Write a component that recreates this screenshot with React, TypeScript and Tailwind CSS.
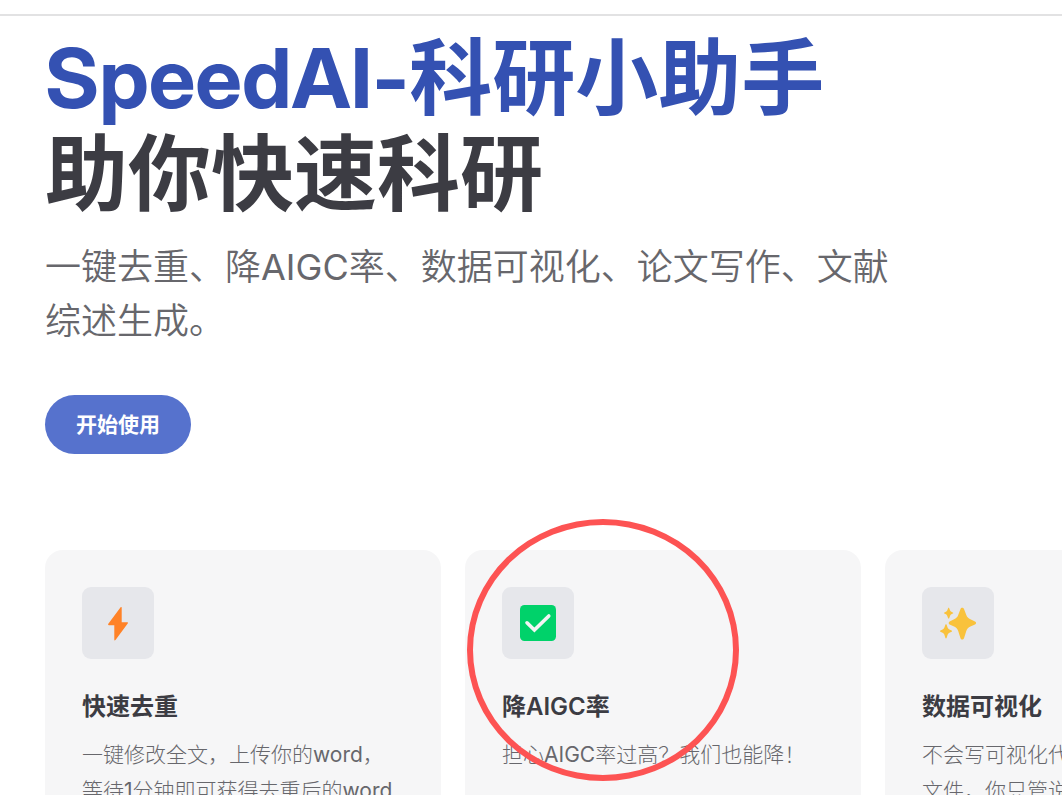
import { Fragment, type ReactNode } from 'react'

interface Feature {
  icon: ReactNode
  title: string
  details: string
  highlighted?: boolean
}

const BoltIcon = () => (
  <svg viewBox="0 0 36 36" className="size-9" aria-hidden="true">
    <path
      d="M20.8 2 Q21.7 1.6 21.7 2.6 V17.2 H27.2 Q28.6 17.3 27.7 18.5 L15.7 34.8 Q14.3 36.4 14.3 34.6 V20.3 H9 Q7.5 20 8.5 18.6 Z"
      fill="#ff8227"
    />
  </svg>
)

const CheckIcon = () => (
  <svg viewBox="0 0 36 36" className="size-9" aria-hidden="true">
    <rect width="36" height="36" rx="4.5" fill="#00d26a" />
    <path
      d="M7 17.8 L14.4 25 L28.8 11"
      fill="none"
      stroke="#f4f4f4"
      strokeWidth="3.6"
      strokeLinecap="round"
      strokeLinejoin="miter"
    />
  </svg>
)

const SparklesIcon = () => (
  <svg viewBox="0 0 36 36" className="size-9" aria-hidden="true" fill="#f9c23c">
    <path d="M20.5 4 C21 2.4 23.4 2.4 24 4 L26.3 10 C27 12 28.4 13.4 30.4 14.2 L35 16.4 C36.4 17 36.4 18.9 35 19.5 L30.4 21.6 C28.4 22.4 27 23.9 26.3 25.9 L24 33.2 C23.4 34.9 21 34.9 20.5 33.2 L18.2 25.9 C17.5 23.9 16.1 22.4 14.1 21.6 L9.6 19.5 C8.4 18.9 8.4 17 9.6 16.4 L14.1 14.2 C16.1 13.4 17.5 12 18.2 10 Z" />
    <path d="M8.1 3.2 C8.3 2.7 9 2.7 9.2 3.2 L10.1 5.4 C10.4 6 10.8 6.5 11.4 6.8 L12.8 7.5 C13.3 7.8 13.3 8.4 12.8 8.6 L11.4 9.3 C10.8 9.6 10.4 10.1 10.1 10.7 L9.2 13.2 C9 13.7 8.3 13.7 8.1 13.2 L7.2 10.7 C6.9 10.1 6.5 9.6 5.9 9.3 L4.4 8.6 C3.9 8.4 3.9 7.8 4.4 7.5 L5.9 6.8 C6.5 6.5 6.9 6 7.2 5.4 Z" />
    <path d="M5.4 19.7 C5.6 19.1 6.4 19.1 6.6 19.7 L7.7 22.8 C8 23.6 8.6 24.2 9.4 24.5 L11.6 25.5 C12.2 25.8 12.2 26.5 11.6 26.7 L9.4 27.7 C8.6 28 8 28.6 7.7 29.4 L6.6 33 C6.4 33.6 5.6 33.6 5.4 33 L4.3 29.4 C4 28.6 3.4 28 2.6 27.7 L0.4 26.7 C-0.1 26.5 -0.1 25.8 0.4 25.5 L2.6 24.5 C3.4 24.2 4 23.6 4.3 22.8 Z" />
  </svg>
)

const features: Feature[] = [
  {
    icon: <BoltIcon />,
    title: '快速去重',
    details: '一键修改全文，上传你的word，等待1分钟即可获得去重后的word',
  },
  {
    icon: <CheckIcon />,
    title: '降AIGC率',
    details: '担心AIGC率过高？我们也能降！',
    highlighted: true,
  },
  {
    icon: <SparklesIcon />,
    title: '数据可视化',
    details: '不会写可视化代码？上传你的数据文件，你只管说',
  },
]

// Chinese runs are set light, latin runs keep the regular weight
const MixedText = ({ text }: { text: string }) => (
  <>
    {text.split(/([A-Za-z0-9]+)/).map((part, i) =>
      i % 2 ? (
        <span key={i} className="font-normal">{part}</span>
      ) : (
        <Fragment key={i}>{part}</Fragment>
      )
    )}
  </>
)

const FeatureCard = ({ icon, title, details, highlighted }: Feature) => (
  <article className="relative rounded-[18px] bg-[#f6f6f7] p-[37px]">
    <div className="flex size-[72px] items-center justify-center rounded-[9px] bg-[#e6e7eb]">{icon}</div>
    <h2 className="mt-[30px] text-2xl leading-9 font-semibold">{title}</h2>
    <p className="mt-3 text-[21px] leading-9 font-light text-[#67676c]">
      <MixedText text={details} />
    </p>
    {highlighted && (
      <div className="pointer-events-none absolute -top-[31px] left-0.5 h-[262px] w-[272px] rounded-[50%] border-[6px] border-[#fd5353]" />
    )}
  </article>
)

export default function App() {
  return (
    <div
      lang="zh-CN"
      className="h-screen overflow-hidden bg-white font-['Inter','Noto_Sans_CJK_SC',sans-serif] text-[#3c3c43]"
    >
      <header className="h-4 border-b-2 border-[#e2e2e3]" />

      <main className="px-[45px] pt-3.5">
        {/* Hero */}
        <section className="max-w-[864px]">
          <h1 className="font-['Inter_Display','Inter','Noto_Sans_CJK_SC',sans-serif] text-[83px] leading-[96px] font-bold [font-feature-settings:'calt'_0] [font-variation-settings:'opsz'_32]">
            <span className="block text-[#3451b2]">SpeedAI-科研小助手</span>
            <span className="block">助你快速科研</span>
          </h1>
          <p className="pt-[18px] text-4xl leading-[54px] font-[350] text-[#67676c]">
            <MixedText text="一键去重、降AIGC率、数据可视化、论文写作、文献综述生成。" />
          </p>
          <button
            type="button"
            className="mt-[47px] h-[59px] rounded-full bg-[#5672cd] px-[31px] text-[21px] font-bold text-white"
          >
            开始使用
          </button>
        </section>

        {/* Features */}
        <section className="mt-24 grid auto-cols-[396px] grid-flow-col gap-6">
          {features.map((feature) => (
            <FeatureCard key={feature.title} {...feature} />
          ))}
        </section>
      </main>
    </div>
  )
}
